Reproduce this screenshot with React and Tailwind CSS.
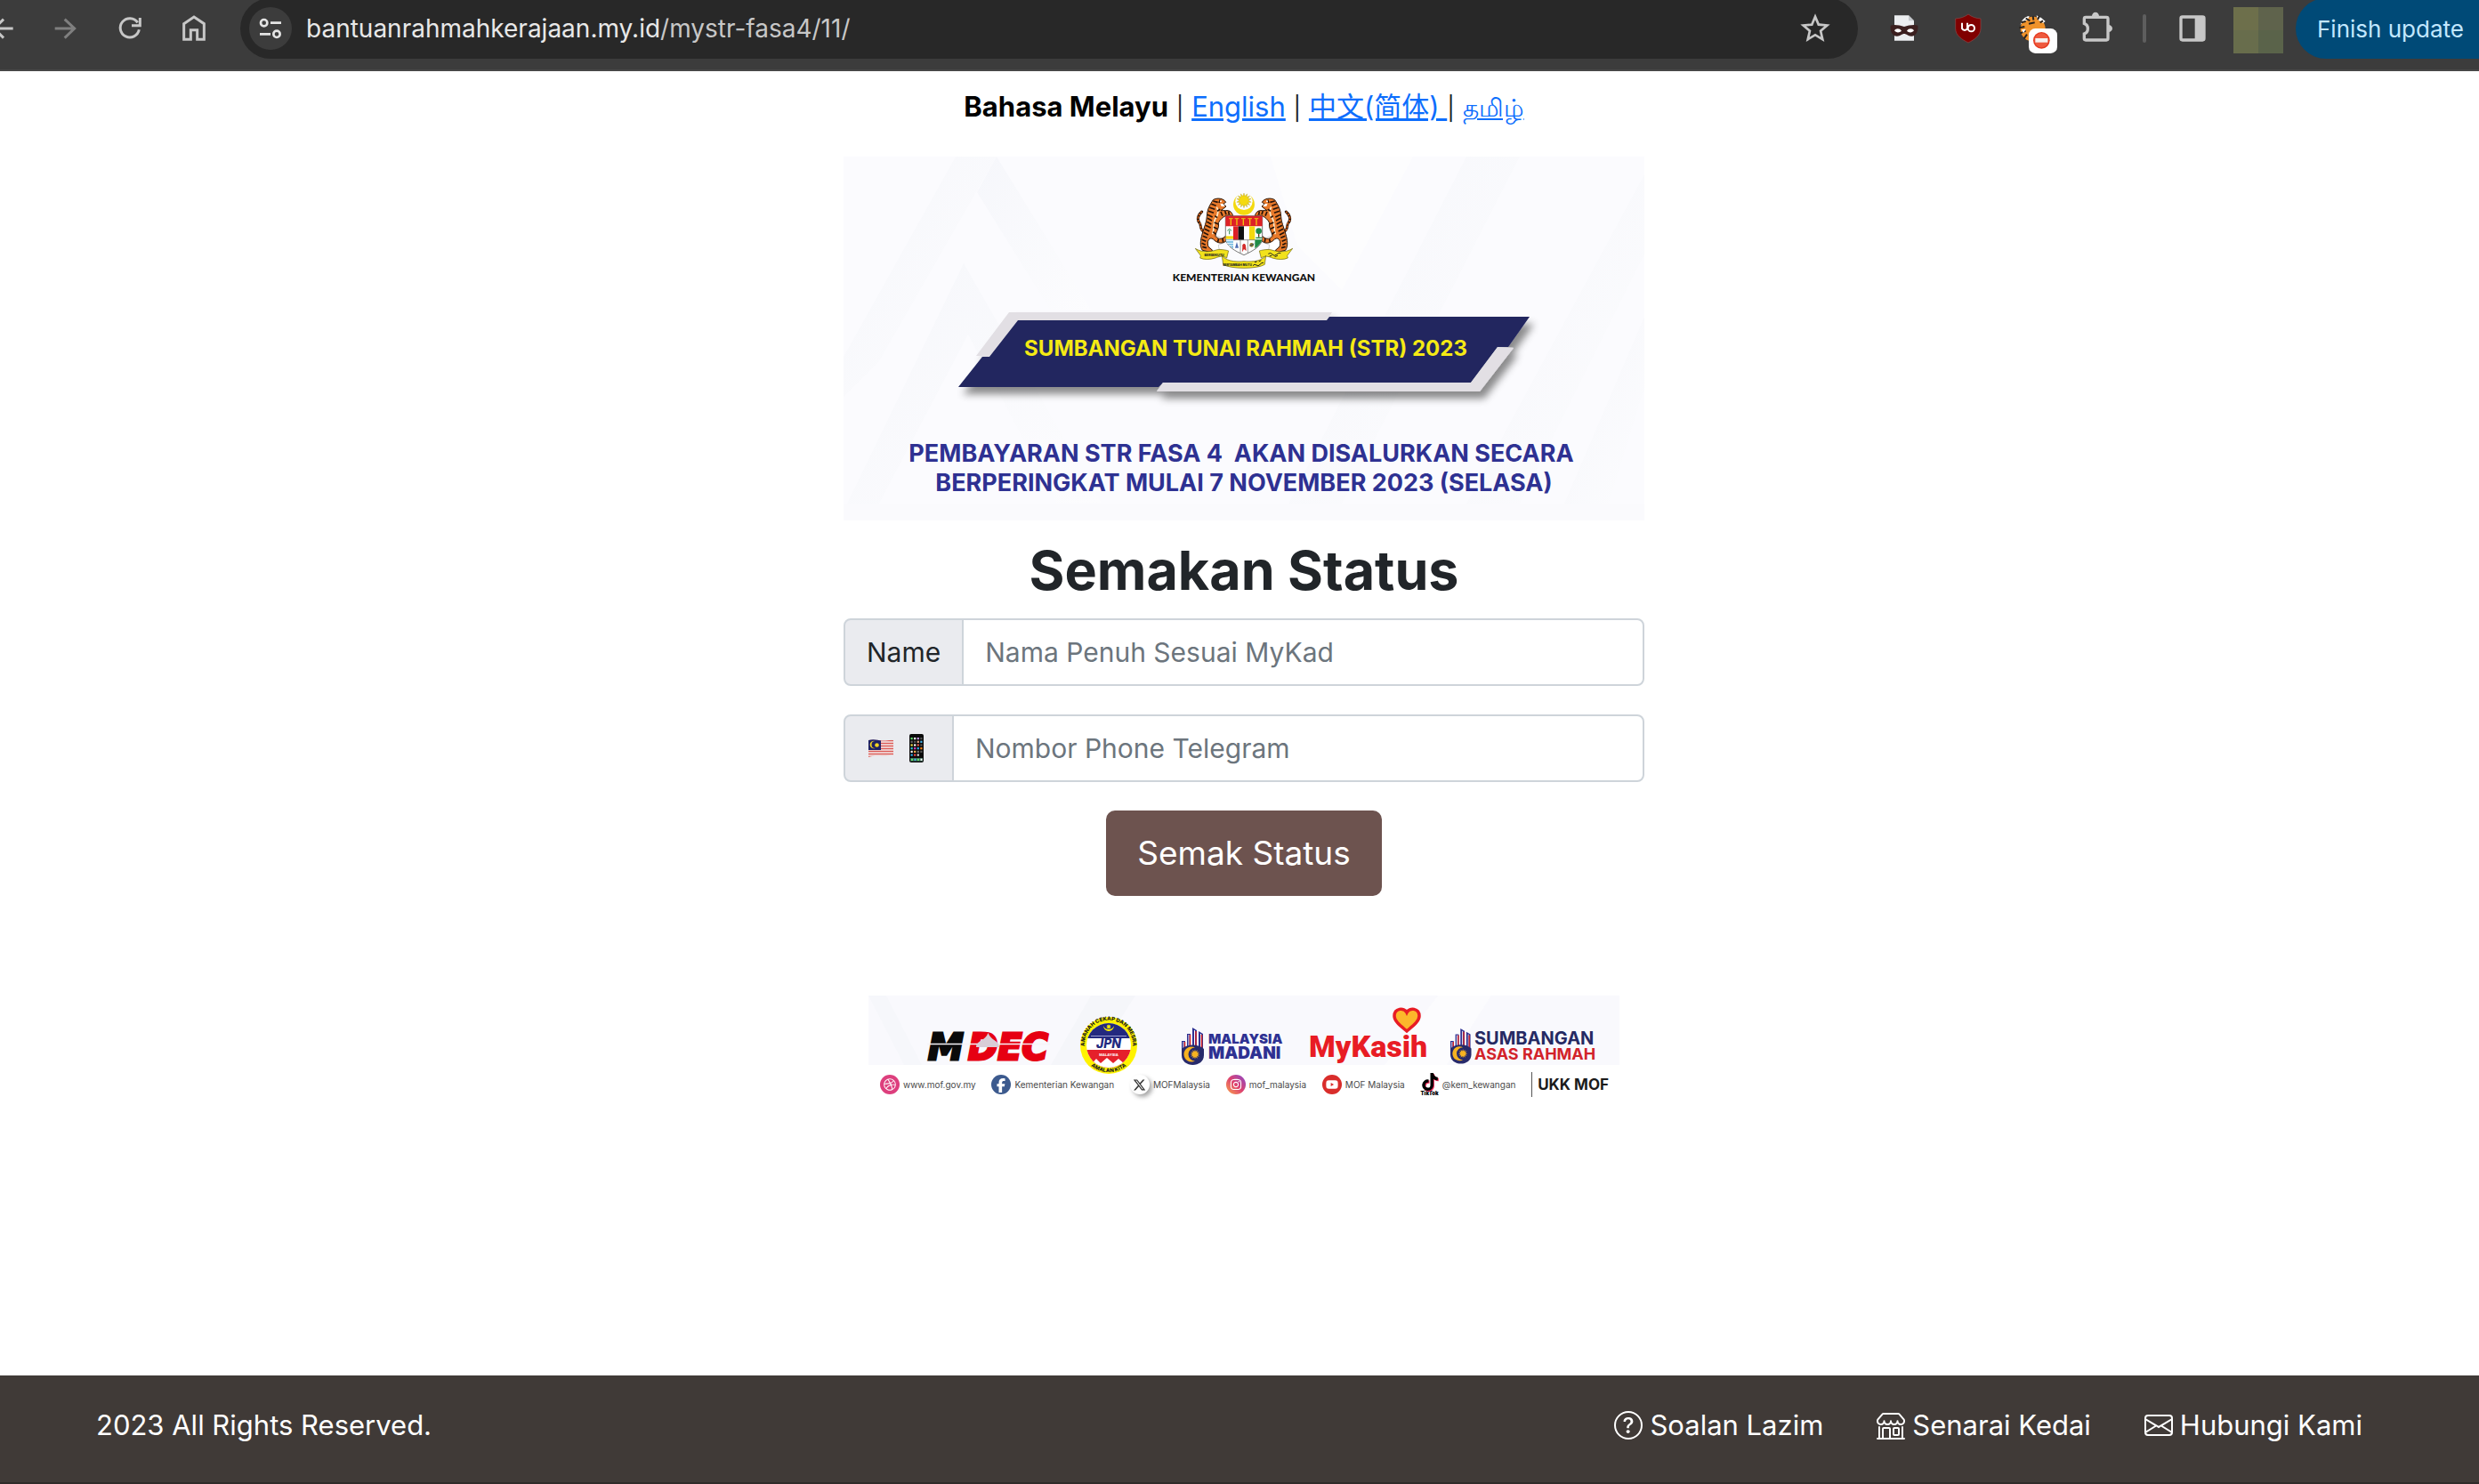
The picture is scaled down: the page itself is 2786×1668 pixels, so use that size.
import React from "react";
import { BsQuestionCircle, BsShop, BsEnvelope } from "react-icons/bs";
import { MdStarBorder } from "react-icons/md";
import { FaFacebookF, FaInstagram, FaTiktok, FaXTwitter, FaYoutube, FaDribbble } from "react-icons/fa6";

function starPoints(cx, cy, outer, inner, n) {
  const pts = [];
  for (let i = 0; i < n * 2; i++) {
    const r = i % 2 ? inner : outer;
    const a = (Math.PI * i) / n - Math.PI / 2;
    pts.push((cx + r * Math.cos(a)).toFixed(2) + "," + (cy + r * Math.sin(a)).toFixed(2));
  }
  return pts.join(" ");
}

function ToolButton({ label, children }) {
  return (
    <button type="button" aria-label={label} className="flex h-16 w-[72px] shrink-0 items-center justify-center">
      {children}
    </button>
  );
}

function BrowserBar() {
  return (
    <header className="flex h-20 shrink-0 items-center overflow-hidden border-b-2 border-[#474747] bg-[#3c3c3c] pb-[14px]">
      <div className="-ml-[34px] flex shrink-0">
        <ToolButton label="Back">
          <svg viewBox="-30 60 72 72" className="size-6 overflow-visible" fill="none" stroke="#c7c7c7" strokeWidth="9">
            <path d="M44 96H-18M12 65L-20 96L12 128" />
          </svg>
        </ToolButton>
        <ToolButton label="Forward">
          <svg viewBox="186 60 72 72" className="size-6 overflow-visible" fill="none" stroke="#7f7f7f" strokeWidth="9">
            <path d="M185 96H250M218 65L251 96L218 128" />
          </svg>
        </ToolButton>
        <ToolButton label="Reload">
          <svg viewBox="402 60 72 72" className="size-6 overflow-visible" fill="none" stroke="#c7c7c7" strokeWidth="9">
            <path d="M469 100A32 32 0 1 1 464 76" />
            <path d="M472 60V86H444" />
          </svg>
        </ToolButton>
        <ToolButton label="Home">
          <svg viewBox="618 60 72 72" className="size-6 overflow-visible" fill="none" stroke="#c7c7c7" strokeWidth="9">
            <path d="M620 80L654 57L688 80V133H665V101H643V133H620Z" />
          </svg>
        </ToolButton>
      </div>

      <div className="ml-4 flex h-[68px] min-w-0 flex-1 items-center rounded-full bg-[#282828] pl-[10px] pr-6">
        <button type="button" aria-label="View site information" className="flex size-12 shrink-0 items-center justify-center rounded-full bg-[#3c3c3c]">
          <svg viewBox="876 60 72 72" className="size-6 overflow-visible" fill="none" stroke="#e3e3e3" strokeWidth="8">
            <circle cx="890" cy="77" r="11" />
            <path d="M912 77H948M876 115H912" />
            <circle cx="933" cy="115" r="11" />
          </svg>
        </button>
        <p className="ml-4 flex-1 text-[28px] leading-9 text-[#c7c7c7]">
          <span className="text-[#e8e8e8]">bantuanrahmahkerajaan.my.id</span>/mystr-fasa4/11/
        </p>
        <button type="button" aria-label="Bookmark this tab" className="flex size-12 items-center justify-center text-[#c7c7c7]">
          <MdStarBorder className="size-10" />
        </button>
      </div>

      <div className="ml-4 flex shrink-0 items-center">
        <ToolButton label="Incognito filter extension">
          <svg viewBox="36 42 108 108" className="size-9">
            <path d="M57 52H105L123 70V137H57Z" fill="#eceef0" />
            <path d="M105 52L123 70H105Z" fill="#c4c8cc" />
            <path d="M44 86C58 82 76 86 90 90C104 86 122 82 136 86C138 104 130 122 114 122C102 122 98 114 90 114C82 114 78 122 66 122C50 122 42 104 44 86Z" fill="#3b1f1f" />
            <path d="M57 103C62 94 76 95 81 104C74 111 63 111 57 103ZM123 103C118 94 104 95 99 104C106 111 117 111 123 103Z" fill="#fff" />
          </svg>
        </ToolButton>
        <ToolButton label="uBlock Origin">
          <svg viewBox="252 42 108 108" className="size-9">
            <path d="M306 48C318 57 332 62 348 63V96C348 120 326 134 306 144C286 134 263 120 263 96V63C280 62 294 57 306 48Z" fill="#800000" stroke="#8d4a4a" strokeWidth="2" />
            <path d="M285 77V96A10 10 0 0 0 303 96V77" fill="none" stroke="#fff" strokeWidth="6" />
            <circle cx="316" cy="95" r="11" fill="none" stroke="#fff" strokeWidth="6" />
          </svg>
        </ToolButton>
        <ToolButton label="Tiger extension, blocked">
          <svg viewBox="468 42 108 108" className="size-9 overflow-visible">
            <circle cx="524" cy="98" r="42" fill="#f0932b" />
            <path d="M482 84C486 66 498 56 512 54L506 68L492 72ZM536 52L552 60L566 72L558 78L540 66Z" fill="#fff" />
            <path d="M484 76L500 72M500 62L514 70M524 54L526 68M546 54L540 66M558 70L548 76M478 94L496 90M482 112L500 104M494 130L504 116M510 80L530 76" stroke="#2a2420" strokeWidth="6" />
            <path d="M486 100L500 98L492 112Z" fill="#fff" />
            <rect x="510" y="96" width="96" height="84" rx="22" fill="#fff" />
            <circle cx="553" cy="136" r="28" fill="#e5391f" />
            <circle cx="553" cy="136" r="24" fill="#ee5a3e" />
            <rect x="532" y="129" width="42" height="14" fill="#f7f2f0" />
          </svg>
        </ToolButton>
        <ToolButton label="Extensions">
          <svg viewBox="687 42 108 108" className="size-9 overflow-visible">
            <path d="M700 79V63Q700 58 705 58H775Q780 58 780 63V130Q780 135 775 135H705Q700 135 700 130V114C716 108 716 85 700 79Z" fill="none" stroke="#c7c7c7" strokeWidth="10" />
            <path d="M726 54A12 13 0 0 1 750 54ZM782 84A13 12 0 0 1 782 108Z" fill="#c7c7c7" />
          </svg>
        </ToolButton>
        <div className="flex w-9 justify-center">
          <span className="h-8 w-1 rounded-full bg-[#5e5e5e]" />
        </div>
        <ToolButton label="Side panel">
          <svg viewBox="1008 42 108 108" className="size-9">
            <rect x="1023" y="57" width="78" height="78" rx="5" fill="none" stroke="#c7c7c7" strokeWidth="10" />
            <rect x="1070" y="57" width="32" height="78" fill="#c7c7c7" />
          </svg>
        </ToolButton>
        <div className="ml-[10px] mt-1 grid h-[52px] w-14 grid-cols-2 grid-rows-2">
          <span className="bg-[#6d6f4b]" />
          <span className="bg-[#5f634c]" />
          <span className="bg-[#686d4c]" />
          <span className="bg-[#5a634a]" />
        </div>
        <button type="button" className="ml-[14px] h-[68px] w-[206px] whitespace-nowrap rounded-l-full bg-[#004a77] pl-6 text-left text-[26px] text-[#c2e7ff]">
          Finish update
        </button>
      </div>
    </header>
  );
}

function Divider() {
  return <span className="text-[26px]">|</span>;
}

function LanguageNav() {
  return (
    <nav className="h-16 pt-4 text-center text-[31px] leading-[48px] text-[#212529]">
      <strong className="font-bold text-black">Bahasa Melayu</strong> <Divider />{" "}
      <a href="#en" className="text-[#0d6efd] underline">English</a> <Divider />{" "}
      <a href="#zh" className="text-[#0d6efd] underline">中文(简体) </a><Divider />{" "}
      <a href="#ta" className="text-[28px] text-[#0d6efd] underline">தமிழ்</a>
    </nav>
  );
}

function Tiger() {
  return (
    <g>
      <path d="M224 182C200 176 214 160 203 150C194 138 202 122 212 114" fill="none" stroke="#2b1608" strokeWidth="9" strokeLinecap="round" />
      <path d="M224 182C200 176 214 160 203 150C194 138 202 122 212 114" fill="none" stroke="#d9631e" strokeWidth="5" strokeDasharray="7 4" />
      <path d="M236 200C250 190 268 196 280 204L296 200L292 216L268 226L270 240L290 246L262 252L226 250C220 230 224 212 236 200Z" fill="#fff" stroke="#777" strokeWidth="1" />
      <path
        d="M250 74C262 66 286 68 293 82L284 88L294 96L284 104L276 110L292 110C306 108 317 116 317 134L308 126C290 124 274 138 268 152C272 170 258 184 258 196C270 212 284 204 292 196L296 210C284 224 264 222 250 206C236 198 228 214 234 232L248 244L240 250L214 244C204 230 208 208 213 190C220 165 228 150 229 130C230 104 240 90 250 74Z"
        fill="#e8792a" stroke="#2b1608" strokeWidth="3"
      />
      <path d="M262 98C270 112 268 124 256 140C250 160 254 172 248 190" fill="none" stroke="#fbe9c8" strokeWidth="5" />
      <path
        d="M250 78L266 82M244 88L260 94M238 100L256 106M234 112L252 118M231 124L248 132M231 136L246 144M229 148L244 156M225 160L242 168M221 172L238 180M218 184L234 192M215 196L230 202M212 208L226 214M212 220L224 226M214 232L228 236M276 114L282 128M290 111L294 124M302 112L304 124M264 134L256 128M268 156L254 150M264 172L252 166M260 190L250 182M268 206L266 216M282 204L284 216M274 74L270 84M264 112L274 106"
        fill="none" stroke="#26140a" strokeWidth="5"
      />
      <path d="M274 86L284 88L290 96L278 96Z" fill="#fff" />
      <circle cx="276" cy="79" r="3" fill="#fff" />
    </g>
  );
}

function CoatOfArms() {
  return (
    <g>
      <mask id="crescent">
        <rect x="300" y="40" width="110" height="100" fill="#000" />
        <circle cx="354" cy="89" r="36" fill="#fff" />
        <circle cx="354" cy="79" r="29" fill="#000" />
      </mask>
      <rect x="300" y="40" width="110" height="100" fill="#f4d90f" mask="url(#crescent)" />
      <polygon points={starPoints(354, 76, 25, 15, 14)} fill="#f4d90f" stroke="#a08b14" strokeWidth="1" />
      <Tiger />
      <g transform="translate(708 0) scale(-1 1)">
        <Tiger />
      </g>
      <path d="M292 128H416V206C412 232 384 246 354 260C324 246 296 232 292 206Z" fill="#fff" stroke="#333" strokeWidth="2" />
      <path d="M292 128H416V163H292Z" fill="#dd2127" />
      <path d="M310 135V160M330 135V160M352 135V160M374 135V160M396 135V160" stroke="#f4c20d" strokeWidth="4" />
      <path d="M303 137H317M323 137H337M345 137H359M367 137H381M389 137H403" stroke="#e9a81a" strokeWidth="4" />
      <rect x="318" y="163" width="17" height="46" fill="#dd2127" />
      <rect x="335" y="163" width="19" height="46" fill="#111" />
      <rect x="372" y="163" width="19" height="46" fill="#f4d90f" />
      <path d="M305 176V190M298 178L305 172L312 178" stroke="#2d8a4e" strokeWidth="3" fill="none" />
      <path d="M293 196H318V206H293Z" fill="#f4d90f" />
      <path d="M293 208H318V238Q296 224 293 208Z" fill="#6fb8e0" />
      <path d="M294 212H318M296 220H318M302 228H318" stroke="#fff" strokeWidth="3" />
      <path d="M391 208H415Q412 224 391 238Z" fill="#1f8b47" />
      <path d="M404 184V200" stroke="#5a3a1a" strokeWidth="4" />
      <circle cx="404" cy="179" r="10" fill="#1f8b47" />
      <path d="M394 202H414" stroke="#1f8b47" strokeWidth="4" />
      <path d="M318 209H391M342 209V254M367 209V254" stroke="#666" strokeWidth="2" />
      <path d="M330 216L336 236H324Z" fill="#4f6fb5" />
      <path d="M349 232C346 222 358 218 360 228L362 246L354 240L348 250Z" fill="#d32b2b" />
      <circle cx="380" cy="226" r="7" fill="#8b7a2b" />
      <path d="M374 230L388 222" stroke="#31456f" strokeWidth="3" />
      <path d="M190 238C212 252 240 250 264 242C280 240 296 244 302 246L296 270C284 262 272 264 258 270C240 276 218 276 206 270L208 262Z" fill="#f2e21b" stroke="#6b6414" strokeWidth="2" />
      <path d="M518 238C496 252 468 250 444 242C428 240 412 244 406 246L412 270C424 262 436 264 450 270C468 276 490 276 502 270L500 262Z" fill="#f2e21b" stroke="#6b6414" strokeWidth="2" />
      <path d="M280 262C300 286 340 282 354 281C368 282 408 286 428 262L424 292C400 308 308 308 284 292Z" fill="#f2e21b" stroke="#6b6414" strokeWidth="2" />
      <text x="254" y="264" textAnchor="middle" fontSize="11" fontWeight="800" fill="#222">BERSEKUTU</text>
      <text x="332" y="298" textAnchor="middle" fontSize="10" fontWeight="800" fill="#222">BERTAMBAH MUTU</text>
      <path d="M384 296Q390 288 396 294T408 292T420 286M390 284L398 282M404 282L412 278" fill="none" stroke="#222" strokeWidth="3" />
      <path d="M436 256Q444 250 450 258T464 258T478 254M440 264L448 262M458 266L468 262" fill="none" stroke="#222" strokeWidth="3" />
    </g>
  );
}

function HeroBanner() {
  return (
    <svg viewBox="0 0 900 409" className="mt-8 block w-full font-[Inter,sans-serif]" role="img" aria-label="Sumbangan Tunai Rahmah (STR) 2023">
      <defs>
        <filter id="ribbonShadow" x="-10%" y="-20%" width="120%" height="160%">
          <feDropShadow dx="5" dy="8" stdDeviation="4" floodColor="#000" floodOpacity="0.45" />
        </filter>
        <linearGradient id="facet" x1="0" y1="0" x2="1" y2="1">
          <stop offset="0" stopColor="#f6f7fb" />
          <stop offset="1" stopColor="#fcfcfe" />
        </linearGradient>
      </defs>
      <rect width="900" height="409" fill="#fbfbfe" />
      <g fill="url(#facet)">
        <polygon points="126,0 172,0 40,230 0,270 0,225" />
        <polygon points="172,0 278,172 232,172 150,40" />
        <polygon points="135,120 290,390 240,390 140,200 40,390 4,390" />
        <polygon points="480,0 640,0 560,150 510,100" fill="#fdfdfe" />
        <polygon points="700,0 760,0 560,390 500,390" />
        <polygon points="900,20 900,110 760,390 700,390" />
        <polygon points="900,180 900,260 860,390 810,390" />
        <rect y="390" width="900" height="19" fill="#fafafd" />
      </g>
      <g transform="translate(332 24) scale(0.3333)">
        <CoatOfArms />
      </g>
      <text x="450" y="140" textAnchor="middle" fontSize="12" fontWeight="900" fill="#111" className="font-[Lato,sans-serif]">KEMENTERIAN KEWANGAN</text>
      <g filter="url(#ribbonShadow)">
        <polygon points="186,175 549,175 543,185 196,185 164,225 149,224" fill="#e2dfe4" />
        <polygon points="196,184 543,184 546,180 771,180 747,214 735,214 705,254 359,254 354,259 129,259 156,225 164,225" fill="#22275f" />
        <polygon points="735,214 753,215 715,264 352,264 359,254 705,254" fill="#e2dfe4" />
      </g>
      <text x="452" y="224" textAnchor="middle" fontSize="24" fontWeight="700" fill="#f5ea14">SUMBANGAN TUNAI RAHMAH (STR) 2023</text>
      <text x="447" y="343" textAnchor="middle" fontSize="27" fontWeight="700" fill="#2e3192" className="whitespace-pre">PEMBAYARAN STR FASA 4  AKAN DISALURKAN SECARA</text>
      <text x="450" y="376" textAnchor="middle" fontSize="27" fontWeight="700" fill="#2e3192">BERPERINGKAT MULAI 7 NOVEMBER 2023 (SELASA)</text>
    </svg>
  );
}

function FlagIcon() {
  return (
    <svg viewBox="0 0 28 20" className="h-5 w-7" aria-hidden="true">
      <defs>
        <clipPath id="wave">
          <path d="M0 1C6-1 10 1 15 1.500C20 2 24 0 28 1V18C24 17 20 19 15 18.500C10 18 6 18 0 20Z" />
        </clipPath>
      </defs>
      <g clipPath="url(#wave)">
        <rect width="28" height="20" fill="#f3eeee" />
        <path d="M0 1.500H28M0 4.500H28M0 7.500H28M0 10.500H28M0 13.500H28M0 16.500H28M0 19.500H28" stroke="#dc5a55" strokeWidth="1.500" />
        <rect width="14" height="12" fill="#1d2063" />
        <path d="M7.500 2A4.300 4.300 0 1 0 7.500 10A3.400 3.400 0 1 1 7.500 2Z" fill="#f3d321" />
        <circle cx="9.500" cy="6.500" r="2.300" fill="#f3d321" />
      </g>
    </svg>
  );
}

const appRows = [
  ["#5ee06b", "#fff", "#c99ae8", "#555"],
  ["#666", "#555", "#e8a887", "#48b8f0"],
  ["#f3e04a", "#fff", "#e8554a", "#555"],
  ["#30c8d8", "#e040c0", "#30b0f0", "#ff8a1a"],
  ["#fff", "#f3b04a", "#777", "#555"],
  ["#30b0f0", "#f04848", "#ddd", "#0b0b0b"],
];

function PhoneIcon() {
  return (
    <svg viewBox="0 0 16 32" className="h-8 w-4" aria-hidden="true">
      <rect width="16" height="32" rx="2" fill="#0b0b0b" />
      {appRows.map((row, y) => row.map((c, x) => <rect key={x + "-" + y} x={1.5 + x * 3.6} y={4 + y * 3.7} width="2.200" height="2.200" fill={c} />))}
      <rect x="1" y="27" width="14" height="3.600" fill="#3d6b58" />
      <path d="M2 28.800H4M9 28.800H11" stroke="#5ee06b" strokeWidth="2.200" />
      <path d="M5.500 28.800H7.500" stroke="#48b8f0" strokeWidth="2.200" />
      <path d="M12.500 28.800H14.500" stroke="#fff" strokeWidth="2.200" />
    </svg>
  );
}

function StatusForm() {
  return (
    <form className="flex flex-col items-center gap-8" onSubmit={(e) => e.preventDefault()}>
      <div className="flex h-[76px] w-full">
        <label htmlFor="name" className="flex shrink-0 items-center rounded-l-lg border-2 border-[#ced4da] bg-[#eaebef] px-6 text-[30px] text-[#212529]">
          Name
        </label>
        <input id="name" type="text" placeholder="Nama Penuh Sesuai MyKad" className="-ml-0.5 min-w-0 flex-1 rounded-r-lg border-2 border-[#ced4da] bg-white px-6 text-[30px] text-[#212529] placeholder:text-[#6c757d]" />
      </div>
      <div className="flex h-[76px] w-full">
        <label htmlFor="phone" aria-label="Nombor Phone Telegram" className="flex shrink-0 items-center gap-[18px] rounded-l-lg border-2 border-[#ced4da] bg-[#eaebef] pl-[26px] pr-8">
          <FlagIcon />
          <PhoneIcon />
        </label>
        <input id="phone" type="tel" placeholder="Nombor Phone Telegram" className="-ml-0.5 min-w-0 flex-1 rounded-r-lg border-2 border-[#ced4da] bg-white px-6 text-[30px] text-[#212529] placeholder:text-[#6c757d]" />
      </div>
      <button type="submit" className="h-24 rounded-[10px] bg-[#6d534f] px-[35px] text-[37px] text-white">Semak Status</button>
    </form>
  );
}

function MadaniHand() {
  return (
    <g>
      <path d="M0 15H4V30H0ZM6 7H10V28H6ZM12 0L17 3V26H12ZM19 4L24 7V28H19Z" fill="#2e3192" />
      <path d="M2 16V28M8 8V26M14.500 3V24M21.500 7V26" stroke="#fff" strokeWidth="1" />
      <path d="M3.500 16V28M9.500 8V26M16 4V24M22.500 8V26" stroke="#d2232a" strokeWidth="1.500" />
      <path d="M0 24C6 18 19 18 25 24V31C25 38 19 42 12.500 42S0 38 0 31Z" fill="#272a6b" />
      <path d="M15 22.500A8.500 8.500 0 1 0 15 37.500A7.500 7.500 0 1 1 15 22.500Z" fill="#f6b221" />
      <polygon points={starPoints(15, 30, 5.5, 3, 12)} fill="#f6b221" />
    </g>
  );
}

function PartnerLogos() {
  return (
    <svg viewBox="0 0 844 89" className="block w-full font-[Inter,sans-serif]" role="img" aria-label="MDEC, JPN, Malaysia Madani, MyKasih, Sumbangan Asas Rahmah">
      <defs>
        <path id="jpnTop" d="M243.500 60A27 27 0 1 1 296.500 60" />
        <path id="jpnBottom" d="M247 76A31 31 0 0 0 293 76" />
        <clipPath id="jpnDisc">
          <circle cx="270" cy="56" r="25" />
        </clipPath>
      </defs>
      <rect width="844" height="78" fill="#f9f9fd" />
      <polygon points="250,0 300,0 250,78 205,78" fill="#f5f6fa" />
      <polygon points="0,0 20,0 60,78 40,78" fill="#f6f7fb" />
      <polygon points="640,0 700,0 650,78 580,78" fill="#fcfcfe" />

      <g fontSize="40" fontWeight="700" fontStyle="italic" strokeWidth="3" className="font-[DejaVu_Sans,sans-serif]">
        <text x="67" y="72" fill="#0a0a0a" stroke="#0a0a0a">M</text>
        <text x="112" y="72" fill="#e60012" stroke="#e60012">DEC</text>
      </g>
      <path d="M66 54.500H204" stroke="#f6f4f8" strokeWidth="1.500" />
      <path d="M121 58C121 51 128 52 133 45L134.500 42L136 45C141 52 147 51 147 58Z" fill="#d9cdd6" />

      <circle cx="270" cy="56" r="32" fill="#fff200" />
      <g clipPath="url(#jpnDisc)">
        <rect x="245" y="31" width="50" height="50" fill="#fff" />
        <rect x="245" y="31" width="50" height="17" fill="#23297f" />
        <rect x="245" y="61" width="50" height="21" fill="#e5202b" />
        <path d="M246 82L256 71L261 76L268 70L275 76L281 71L294 82Z" fill="#fff" />
        <path d="M264 34A6 6 0 1 0 276 34A6.500 6.500 0 0 1 264 34Z" fill="#fff200" />
        <polygon points={starPoints(270, 35, 3, 1.5, 8)} fill="#fff200" />
        <path d="M250 45.500H290" stroke="#9a9ed0" strokeWidth="1" />
      </g>
      <text x="270" y="59" textAnchor="middle" fontSize="14" fontWeight="800" fontStyle="italic" fill="#23297f">JPN</text>
      <text x="270" y="68" textAnchor="middle" fontSize="4" fontWeight="700" fill="#fff">MALAYSIA</text>
      <g fontSize="6" fontWeight="800" fill="#1b1b1b">
        <text textAnchor="middle"><textPath href="#jpnTop" startOffset="50%">AMANAH CEKAP DAN MESRA</textPath></text>
        <text textAnchor="middle"><textPath href="#jpnBottom" startOffset="50%">AMALAN KITA</textPath></text>
      </g>

      <g transform="translate(352 36)">
        <MadaniHand />
      </g>
      <g fontWeight="900" fill="#2e3192">
        <text x="382" y="54" fontSize="15">MALAYSIA</text>
        <text x="382" y="71" fontSize="19">MADANI</text>
      </g>

      <text x="495" y="69" fontSize="34" fontWeight="900" fill="#e81c24" className="font-[Roboto,sans-serif]">MyKasih</text>
      <path d="M605 40C598 34 591 29 591 23C591 14 602 13 605 19C608 13 619 14 619 23C619 29 612 34 605 40Z" fill="#fcb72b" stroke="#e81c24" strokeWidth="3.500" />

      <g transform="translate(654 37) scale(0.94)">
        <MadaniHand />
      </g>
      <g fontWeight="700">
        <text x="681" y="55" fontSize="20" fill="#262a63">SUMBANGAN</text>
        <text x="681" y="72" fontSize="18" fill="#d2232a">ASAS RAHMAH</text>
      </g>
    </svg>
  );
}

function Social({ icon, children }) {
  return (
    <li className="flex items-center gap-1">
      {icon}
      {children}
    </li>
  );
}

function SocialRow() {
  return (
    <ul className="-mt-px flex h-6 items-center justify-between bg-white pl-[13px] pr-3 text-[10px] leading-none text-[#4a4a4a]">
      <Social icon={<span className="flex size-[22px] items-center justify-center rounded-full bg-[#dd3f7d] text-white"><FaDribbble className="size-[14px]" /></span>}>www.mof.gov.my</Social>
      <Social icon={<span className="flex size-[22px] items-end justify-center rounded-full bg-[#3c5a8e] text-white"><FaFacebookF className="mb-[2px] size-4" /></span>}>Kementerian Kewangan</Social>
      <Social icon={<span className="flex size-[22px] items-center justify-center rounded-full bg-white text-[#333] shadow-[3px_3px_5px_rgba(0,0,0,0.35)]"><FaXTwitter className="size-[15px]" /></span>}>MOFMalaysia</Social>
      <Social icon={<span className="flex size-[22px] items-center justify-center rounded-full bg-linear-to-tr from-[#f9a13a] via-[#dd3f6f] to-[#8a3ac8] text-white"><FaInstagram className="size-[14px]" /></span>}>mof_malaysia</Social>
      <Social icon={<span className="flex size-[22px] items-center justify-center rounded-full bg-[#d92d2b] text-white"><FaYoutube className="size-[14px]" /></span>}>MOF Malaysia</Social>
      <Social icon={
        <span className="flex flex-col items-center text-[6px] font-black leading-[6px] text-black">
          <FaTiktok className="size-[20px] drop-shadow-[1px_1px_0_#ee2a57]" />
          TikTok
        </span>
      }>@kem_kewangan</Social>
      <li className="flex h-7 items-center border-l border-[#555] pl-1.5 text-[17px] font-bold text-[#1b1b1b]">UKK MOF</li>
    </ul>
  );
}

function FooterLink({ icon: Icon, children }) {
  return (
    <a href="#" className="flex items-center gap-2">
      <Icon className="size-8" aria-hidden="true" />
      {children}
    </a>
  );
}

export default function App() {
  return (
    <div className="flex min-h-screen flex-col bg-white font-[Inter,'Noto_Sans_CJK_SC',sans-serif]">
      <BrowserBar />
      <main className="flex-1 pl-[10px]">
        <div className="mx-auto w-full max-w-[900px]">
          <LanguageNav />
          <HeroBanner />
          <h1 className="mb-[14px] mt-4 text-center text-[61px] font-bold leading-[80px] text-[#212529]">Semakan Status</h1>
          <StatusForm />
          <section className="mx-auto mt-28 max-w-[844px]">
            <PartnerLogos />
            <SocialRow />
          </section>
        </div>
      </main>
      <footer className="flex h-[122px] shrink-0 items-center justify-between border-b-2 border-[#2f2b29] bg-[#403a37] pb-2 pl-[108px] pr-[131px] text-[31px] text-white">
        <p>2023 All Rights Reserved.</p>
        <nav className="flex gap-[60px]">
          <FooterLink icon={BsQuestionCircle}>Soalan Lazim</FooterLink>
          <FooterLink icon={BsShop}>Senarai Kedai</FooterLink>
          <FooterLink icon={BsEnvelope}>Hubungi Kami</FooterLink>
        </nav>
      </footer>
    </div>
  );
}
